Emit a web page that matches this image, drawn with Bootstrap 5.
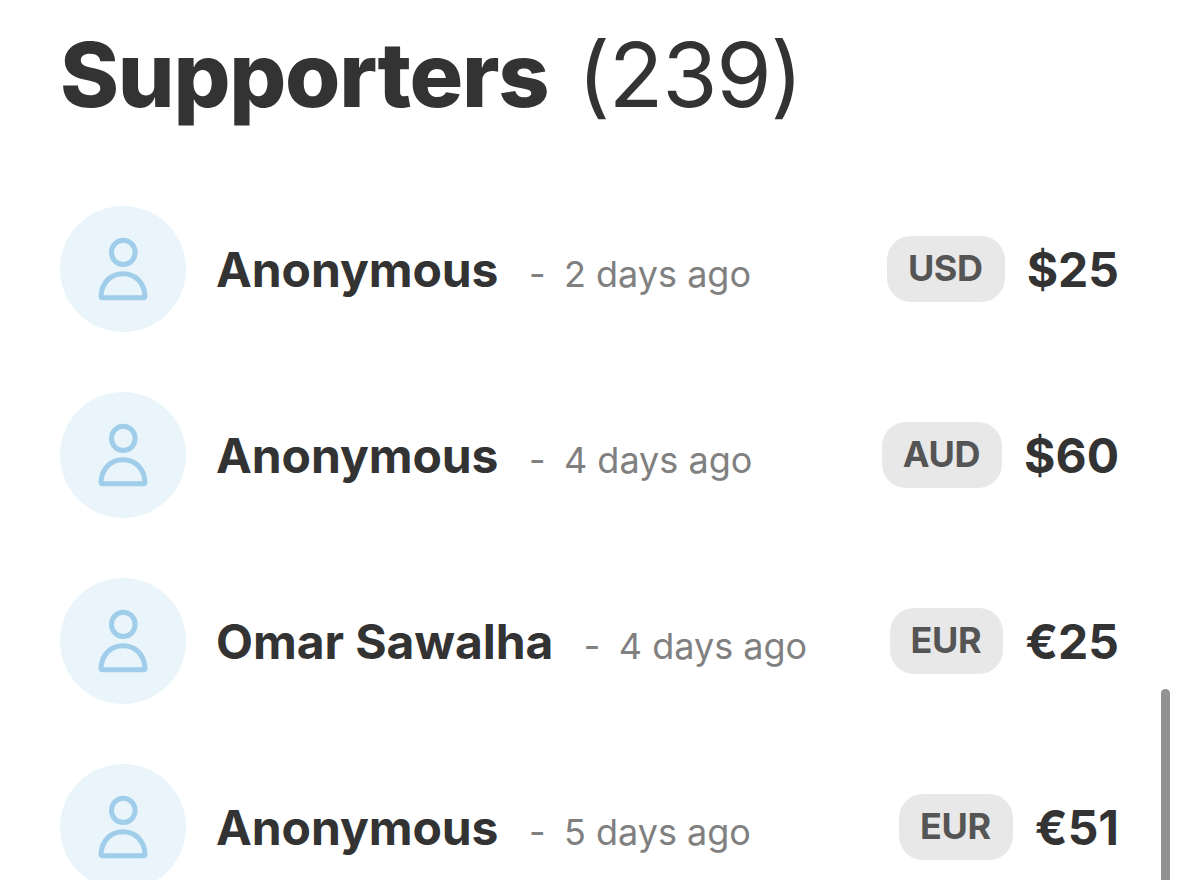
<!DOCTYPE html>
<html lang="en">
<head>
<meta charset="utf-8">
<meta name="viewport" content="width=device-width, initial-scale=1">
<title>Supporters</title>
<link href="https://cdn.jsdelivr.net/npm/bootstrap@5.3.0/dist/css/bootstrap.min.css" rel="stylesheet">
<style>
html, body { height: 100%; }
body { font-family: Inter, "Liberation Sans", sans-serif; color: #333; background: #fff; }
.page { height: 880px; padding: 21px 60px 0; }
.title { font-size: 89.5px; font-weight: 800; line-height: 108px; letter-spacing: -1.25px; height: 185px; }
.title .count { margin-left: 29px; letter-spacing: -1.2px; }
.supporters { gap: 60px; }
.supporter { height: 126px; }
.avatar { width: 126px; height: 126px; background: #e9f5fa; }
.who { margin-left: 30px; font-size: 48px; line-height: 58px; letter-spacing: -.08px; padding-top: 6px; }
.when { margin-left: 30.5px; font-size: 36px; color: #808080; letter-spacing: 0; }
.when .dash { margin-right: 18.5px; }
.currency { height: 66px; padding: 0 22px 0 21px; border-radius: 24px; background: #e8e8e8; color: #555; font-size: 36px; font-weight: 650; letter-spacing: -.4px; line-height: 65px; }
.amount { margin-left: 22px; font-size: 48px; line-height: 58px; padding-top: 2px; }
.thumb { right: 9px; top: 689px; width: 9px; height: 240px; border-radius: 5px; background: #929292; }
</style>
</head>
<body>
<main class="page position-relative overflow-hidden">
  <h1 class="title mb-0 text-nowrap">Supporters<span class="count fw-normal">(239)</span></h1>
  <ul class="supporters list-unstyled d-flex flex-column mb-0" id="list"></ul>
  <div class="thumb position-absolute"></div>
</main>
<template id="row">
  <li class="supporter d-flex align-items-center flex-shrink-0 text-nowrap">
    <svg class="avatar rounded-circle flex-shrink-0" viewBox="0 0 126 126" fill="none" stroke="#9fcdea" stroke-width="5" stroke-linejoin="round"><ellipse cx="63.3" cy="46.4" rx="11.8" ry="12.1"/><path d="M43 91.8Q41 91.8 41 89.8C42 76 51 67.8 63 67.8S84 76 85 89.8Q85 91.8 83 91.8Z"/></svg>
    <div class="who d-flex align-items-baseline"><span class="name fw-bold"></span><span class="when"><span class="dash">-</span><span class="time"></span></span></div>
    <span class="currency ms-auto"></span><span class="amount fw-bold"></span>
  </li>
</template>
<script src="https://cdn.jsdelivr.net/npm/bootstrap@5.3.0/dist/js/bootstrap.bundle.min.js"></script>
<script>
const supporters = [
  { name: 'Anonymous', time: '2 days ago', currency: 'USD', amount: '$25' },
  { name: 'Anonymous', time: '4 days ago', currency: 'AUD', amount: '$60' },
  { name: 'Omar Sawalha', time: '4 days ago', currency: 'EUR', amount: '€25' },
  { name: 'Anonymous', time: '5 days ago', currency: 'EUR', amount: '€51' }
];
for (const s of supporters) {
  const row = document.getElementById('row').content.cloneNode(true);
  for (const key in s) row.querySelector('.' + key).textContent = s[key];
  document.getElementById('list').append(row);
}
</script>
</body>
</html>
